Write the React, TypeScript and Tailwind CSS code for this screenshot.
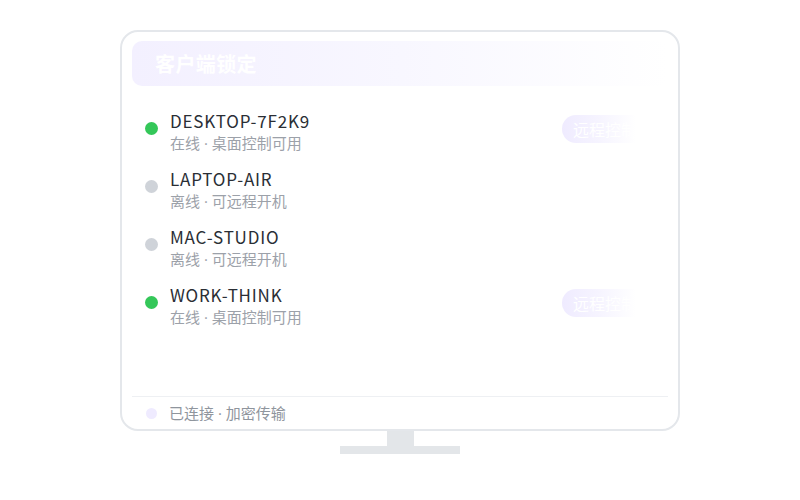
const devices = [
  { name: 'DESKTOP-7F2K9', online: true },
  { name: 'LAPTOP-AIR', online: false },
  { name: 'MAC-STUDIO', online: false },
  { name: 'WORK-THINK', online: true },
]

const subFont = { fontFamily: '"Open Sans", "Noto Sans CJK SC", sans-serif' }

function DeviceRow({ name, online }: { name: string; online: boolean }) {
  return (
    <div className="flex h-[58px] items-start">
      <div className="flex w-[38px] shrink-0 justify-center pt-[14px]">
        <span className={`h-[13px] w-[13px] rounded-full ${online ? 'bg-[#34c759]' : 'bg-[#cfd3d9]'}`} />
      </div>
      <div className="flex-1 pt-[2px]">
        <div className="text-[17px] leading-[22px] tracking-[0.8px] text-[#2a2e35]">{name}</div>
        <div className="mt-[1px] text-[15px] leading-[20px] text-[#9ca1a9]" style={subFont}>
          {online ? '在线 · 桌面控制可用' : '离线 · 可远程开机'}
        </div>
      </div>
      <div className="mr-[32px] mt-[7px] w-[74px]">
        {online && (
          <div className="flex h-[28px] items-center overflow-hidden rounded-l-full bg-gradient-to-r from-[#efebff] via-[#f6f4ff] to-white pl-[11px]">
            <span className="whitespace-nowrap text-[16px] text-white">远程控制</span>
          </div>
        )}
      </div>
    </div>
  )
}

export default function App() {
  return (
    <div
      className="flex h-[500px] w-[800px] flex-col items-center bg-white pt-[30px]"
      style={{ fontFamily: '"Noto Sans CJK SC", "Noto Sans", sans-serif' }}
    >
      <div className="flex h-[401px] w-[560px] flex-col rounded-[18px] border-2 border-[#e4e7eb] bg-white px-[10px] pt-[9px]">
        <div className="flex h-[45px] items-center rounded-[10px] bg-gradient-to-r from-[#f3f0ff] via-[#f8f7ff] to-white px-[23px]">
          <span className="text-[20px] font-bold tracking-[0.4px] text-white">客户端锁定</span>
        </div>
        <div className="mt-[22px] flex flex-col">
          {devices.map(d => (
            <DeviceRow key={d.name} name={d.name} online={d.online} />
          ))}
        </div>
        <div className="mt-auto flex h-[33px] items-center border-t border-[#eef0f3] pl-[14px]">
          <span className="h-[11px] w-[11px] rounded-full bg-[#efebff]" />
          <span className="ml-[12px] text-[15px] text-[#8f959d]" style={subFont}>已连接 · 加密传输</span>
        </div>
      </div>
      <div className="h-[15px] w-[27px] bg-[#e3e6e9]" />
      <div className="h-[8px] w-[120px] bg-[#e3e6e9]" />
    </div>
  )
}
